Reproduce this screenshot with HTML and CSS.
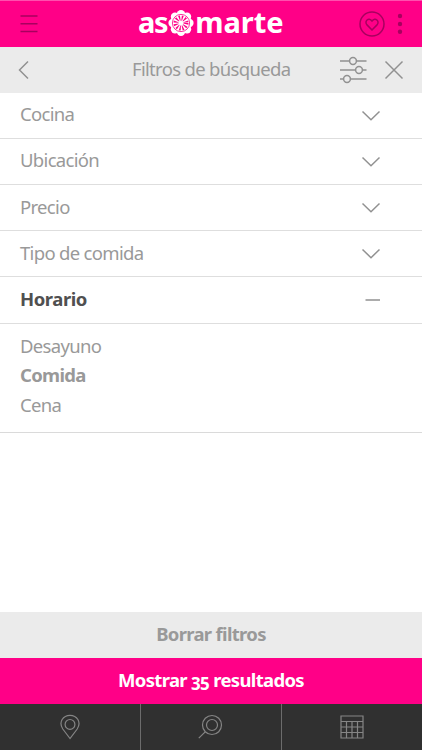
FILE: index.html
```html
<!DOCTYPE html>
<html lang="es">

<head>
    <meta charset="UTF-8">
    <meta name="viewport" content="width=device-width, initial-scale=1.0">
    <title>Asomarte</title>
    <link rel="stylesheet" href="styles.css">
</head>

<body>
    <header class="header">
        <svg class="menu" width="18" height="18" viewBox="0 0 18 18">
            <path d="M0.5 1H17.5M0.5 8.8H17.5M0.5 16.6H17.5" />
        </svg>
        <div class="logo">
            <span class="logo-as">as</span>
            <svg class="flower" width="26" height="28" viewBox="-13 -14 26 28">
                <g fill="#fff">
                    <circle r="10.5" />
                    <circle cx="0" cy="-8.8" r="4.2" />
                    <circle cx="0" cy="8.8" r="4.2" />
                    <circle cx="-8.4" cy="0" r="4.2" />
                    <circle cx="8.4" cy="0" r="4.2" />
                    <circle cx="-6" cy="-6.2" r="4.2" />
                    <circle cx="6" cy="-6.2" r="4.2" />
                    <circle cx="-6" cy="6.2" r="4.2" />
                    <circle cx="6" cy="6.2" r="4.2" />
                </g>
                <circle r="8.6" fill="none" stroke="#ff0087" stroke-width="0.8" />
                <circle r="5" fill="none" stroke="#ff0087" stroke-width="5" stroke-dasharray="1.25 1.37" />
            </svg>
            <span class="logo-marte">marte</span>
        </div>
        <svg class="heart" width="26" height="26" viewBox="0 0 26 26">
            <circle cx="13" cy="13" r="12" />
            <path d="M13 19L8 13.9C4.8 10.3 9.7 5.6 13 10C16.3 5.6 21.2 10.3 18 13.9Z" />
        </svg>
        <svg class="dots" width="6" height="22" viewBox="0 0 6 22">
            <circle cx="3" cy="3" r="2.2" />
            <circle cx="3" cy="11" r="2.2" />
            <circle cx="3" cy="18.8" r="2.2" />
        </svg>
    </header>

    <div class="subheader">
        <svg class="back" width="12" height="20" viewBox="0 0 12 20">
            <path d="M10 1.5L1.5 10L10 18.5" />
        </svg>
        <h1 class="title">Filtros de búsqueda</h1>
        <svg class="settings" width="28" height="28" viewBox="0 0 28 28">
            <path d="M0 5H9.5M16.5 5H26.5M0 14H15.5M22.5 14H26.5M0 23H3.5M10.5 23H26.5" />
            <circle cx="13" cy="5" r="3.4" />
            <circle cx="19" cy="14" r="3.4" />
            <circle cx="7" cy="23" r="3.4" />
        </svg>
        <svg class="close" width="20" height="20" viewBox="0 0 20 20">
            <path d="M1.5 1.5L18.5 18.5M18.5 1.5L1.5 18.5" />
        </svg>
    </div>

    <main class="filters">
        <div class="filter">
            <span>Cocina</span>
            <svg width="20" height="12" viewBox="0 0 20 12"><path d="M1.5 1.5L10 9.7L18.5 1.5" /></svg>
        </div>
        <div class="filter">
            <span>Ubicación</span>
            <svg width="20" height="12" viewBox="0 0 20 12"><path d="M1.5 1.5L10 9.7L18.5 1.5" /></svg>
        </div>
        <div class="filter">
            <span>Precio</span>
            <svg width="20" height="12" viewBox="0 0 20 12"><path d="M1.5 1.5L10 9.7L18.5 1.5" /></svg>
        </div>
        <div class="filter">
            <span>Tipo de comida</span>
            <svg width="20" height="12" viewBox="0 0 20 12"><path d="M1.5 1.5L10 9.7L18.5 1.5" /></svg>
        </div>
        <div class="filter open">
            <span>Horario</span>
            <svg width="20" height="12" viewBox="0 0 20 12"><path d="M4.5 5H19" /></svg>
        </div>
        <ul class="options">
            <li>Desayuno</li>
            <li class="selected">Comida</li>
            <li>Cena</li>
        </ul>
    </main>

    <div class="btn btnClean">Borrar filtros</div>
    <div class="btn btnShow">Mostrar <span class="number">35</span> resultados</div>

    <nav class="nav">
        <div class="tab">
            <svg width="20" height="26" viewBox="0 0 20 26">
                <path d="M10 24.5L2.8 15C-1.8 8 3.2 1.3 10 1.3C16.8 1.3 21.8 8 17.2 15Z" />
                <circle cx="10" cy="10.4" r="4.9" />
            </svg>
        </div>
        <div class="tab">
            <svg width="26" height="26" viewBox="0 0 26 26">
                <circle cx="14" cy="11" r="9.5" />
                <circle cx="14" cy="11" r="5.5" />
                <path d="M7.2 17.8L0.8 24.2" />
            </svg>
        </div>
        <div class="tab">
            <svg width="24" height="24" viewBox="0 0 24 24">
                <path d="M1 1H23V23H1ZM1 6.5H23M1 12H23M1 17.5H23M6.5 6.5V23M12 6.5V23M17.5 6.5V23" />
            </svg>
        </div>
    </nav>
</body>

</html>
```

FILE: styles.css
```css
* {
    box-sizing: border-box;
}

body {
    margin: 0;
    height: 750px;
    display: flex;
    flex-direction: column;
    font-family: "Noto Sans", "Open Sans", sans-serif;
    font-size: 18.5px;
    letter-spacing: -0.68px;
    color: #999;
    background-color: #fff;
    overflow: hidden;
}

svg {
    display: block;
    flex: none;
    fill: none;
    stroke: #919191;
    stroke-width: 1.5;
}

.header {
    height: 46.7px;
    display: flex;
    align-items: center;
    padding: 0 19px 0 20px;
    background-color: #ff0087;
    border-top: 1px solid #ff4fae;
}

.header svg {
    stroke: #a8005f;
}

.logo {
    display: flex;
    align-items: center;
    width: 147px;
    margin-left: 100px;
    color: #fff;
    font-size: 29px;
    font-weight: 700;
    letter-spacing: 0;
    line-height: 41px;
    padding-bottom: 4px;
}

.logo-as {
    letter-spacing: -1.4px;
}

.logo .flower {
    stroke: none;
    margin: 3px 1px 0;
}

.heart {
    margin-left: 74px;
}

.header .dots {
    margin-left: 12px;
    fill: #a8005f;
    stroke: none;
}

.subheader {
    height: 46px;
    display: flex;
    align-items: center;
    padding: 0 18px;
    background-color: #ebebeb;
}

.title {
    width: 160px;
    margin: 0 0 2px 102px;
    font-size: 18.5px;
    font-weight: 400;
    white-space: nowrap;
}

.settings {
    margin-left: 48px;
}

.close {
    margin-left: 16px;
}

.filter {
    height: 46.2px;
    display: flex;
    align-items: center;
    justify-content: space-between;
    padding: 0 41px 0 20px;
    border-bottom: 1px solid #dedede;
}

.filter span {
    padding-bottom: 3px;
}

.filter svg {
    margin-top: 1px;
}

.open {
    color: #505050;
    font-weight: 700;
    letter-spacing: -0.45px;
}

.options {
    height: 109.3px;
    margin: 0;
    padding: 7px 20px;
    list-style: none;
    line-height: 29.7px;
    border-bottom: 1px solid #dadada;
}

.selected {
    font-weight: 700;
}

.btn {
    height: 46px;
    line-height: 43px;
    text-align: center;
    font-weight: 700;
}

.btnClean {
    margin-top: auto;
    background-color: #ebebeb;
}

.btnShow {
    color: #fff;
    background-color: #ff0087;
}

/* old style figures, they hang below the baseline */
.number {
    font-size: 17px;
    line-height: 0;
    vertical-align: -3px;
}

.nav {
    height: 46px;
    display: grid;
    grid-template-columns: 140px 141px 141px;
    background-color: #303030;
}

.nav svg {
    stroke: #858585;
    stroke-width: 1.2;
}

.tab {
    display: flex;
    align-items: center;
    justify-content: center;
}

.tab + .tab {
    border-left: 1px solid #6c6c6c;
}
```
